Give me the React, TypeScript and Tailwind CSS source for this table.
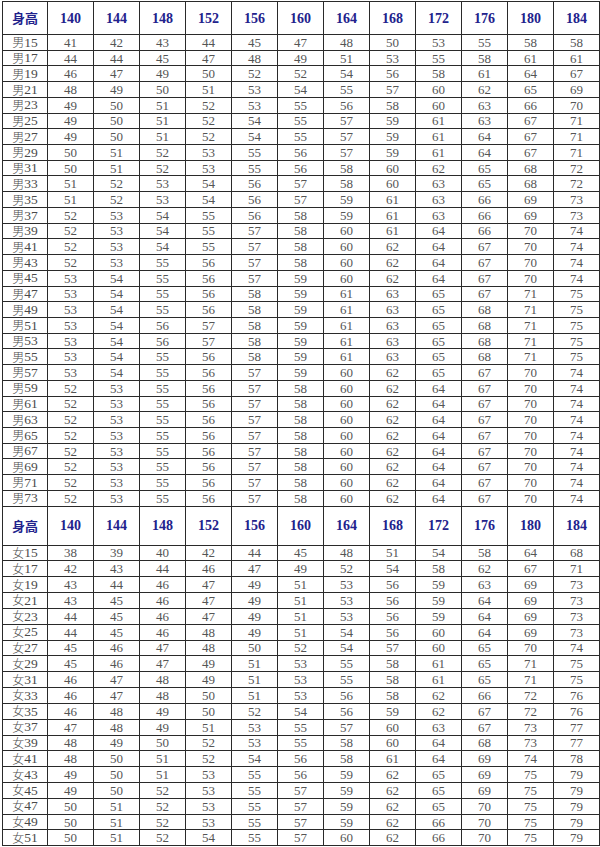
import React from "react";

const heights = ["140", "144", "148", "152", "156", "160", "164", "168", "172", "176", "180", "184"];

const male: [string, number[]][] = [
  ["男15", [41, 42, 43, 44, 45, 47, 48, 50, 53, 55, 58, 58]],
  ["男17", [44, 44, 45, 47, 48, 49, 51, 53, 55, 58, 61, 61]],
  ["男19", [46, 47, 49, 50, 52, 52, 54, 56, 58, 61, 64, 67]],
  ["男21", [48, 49, 50, 51, 53, 54, 55, 57, 60, 62, 65, 69]],
  ["男23", [49, 50, 51, 52, 53, 55, 56, 58, 60, 63, 66, 70]],
  ["男25", [49, 50, 51, 52, 54, 55, 57, 59, 61, 63, 67, 71]],
  ["男27", [49, 50, 51, 52, 54, 55, 57, 59, 61, 64, 67, 71]],
  ["男29", [50, 51, 52, 53, 55, 56, 57, 59, 61, 64, 67, 71]],
  ["男31", [50, 51, 52, 53, 55, 56, 58, 60, 62, 65, 68, 72]],
  ["男33", [51, 52, 53, 54, 56, 57, 58, 60, 63, 65, 68, 72]],
  ["男35", [51, 52, 53, 54, 56, 57, 59, 61, 63, 66, 69, 73]],
  ["男37", [52, 53, 54, 55, 56, 58, 59, 61, 63, 66, 69, 73]],
  ["男39", [52, 53, 54, 55, 57, 58, 60, 61, 64, 66, 70, 74]],
  ["男41", [52, 53, 54, 55, 57, 58, 60, 62, 64, 67, 70, 74]],
  ["男43", [52, 53, 55, 56, 57, 58, 60, 62, 64, 67, 70, 74]],
  ["男45", [53, 54, 55, 56, 57, 59, 60, 62, 64, 67, 70, 74]],
  ["男47", [53, 54, 55, 56, 58, 59, 61, 63, 65, 67, 71, 75]],
  ["男49", [53, 54, 55, 56, 58, 59, 61, 63, 65, 68, 71, 75]],
  ["男51", [53, 54, 56, 57, 58, 59, 61, 63, 65, 68, 71, 75]],
  ["男53", [53, 54, 56, 57, 58, 59, 61, 63, 65, 68, 71, 75]],
  ["男55", [53, 54, 55, 56, 58, 59, 61, 63, 65, 68, 71, 75]],
  ["男57", [53, 54, 55, 56, 57, 59, 60, 62, 65, 67, 70, 74]],
  ["男59", [52, 53, 55, 56, 57, 58, 60, 62, 64, 67, 70, 74]],
  ["男61", [52, 53, 55, 56, 57, 58, 60, 62, 64, 67, 70, 74]],
  ["男63", [52, 53, 55, 56, 57, 58, 60, 62, 64, 67, 70, 74]],
  ["男65", [52, 53, 55, 56, 57, 58, 60, 62, 64, 67, 70, 74]],
  ["男67", [52, 53, 55, 56, 57, 58, 60, 62, 64, 67, 70, 74]],
  ["男69", [52, 53, 55, 56, 57, 58, 60, 62, 64, 67, 70, 74]],
  ["男71", [52, 53, 55, 56, 57, 58, 60, 62, 64, 67, 70, 74]],
  ["男73", [52, 53, 55, 56, 57, 58, 60, 62, 64, 67, 70, 74]],
];

const female: [string, number[]][] = [
  ["女15", [38, 39, 40, 42, 44, 45, 48, 51, 54, 58, 64, 68]],
  ["女17", [42, 43, 44, 46, 47, 49, 52, 54, 58, 62, 67, 71]],
  ["女19", [43, 44, 46, 47, 49, 51, 53, 56, 59, 63, 69, 73]],
  ["女21", [43, 45, 46, 47, 49, 51, 53, 56, 59, 64, 69, 73]],
  ["女23", [44, 45, 46, 47, 49, 51, 53, 56, 59, 64, 69, 73]],
  ["女25", [44, 45, 46, 48, 49, 51, 54, 56, 60, 64, 69, 73]],
  ["女27", [45, 46, 47, 48, 50, 52, 54, 57, 60, 65, 70, 74]],
  ["女29", [45, 46, 47, 49, 51, 53, 55, 58, 61, 65, 71, 75]],
  ["女31", [46, 47, 48, 49, 51, 53, 55, 58, 61, 65, 71, 75]],
  ["女33", [46, 47, 48, 50, 51, 53, 56, 58, 62, 66, 72, 76]],
  ["女35", [46, 48, 49, 50, 52, 54, 56, 59, 62, 67, 72, 76]],
  ["女37", [47, 48, 49, 51, 53, 55, 57, 60, 63, 67, 73, 77]],
  ["女39", [48, 49, 50, 52, 53, 55, 58, 60, 64, 68, 73, 77]],
  ["女41", [48, 50, 51, 52, 54, 56, 58, 61, 64, 69, 74, 78]],
  ["女43", [49, 50, 51, 53, 55, 56, 59, 62, 65, 69, 75, 79]],
  ["女45", [49, 50, 52, 53, 55, 57, 59, 62, 65, 69, 75, 79]],
  ["女47", [50, 51, 52, 53, 55, 57, 59, 62, 65, 70, 75, 79]],
  ["女49", [50, 51, 52, 53, 55, 57, 59, 62, 66, 70, 75, 79]],
  ["女51", [50, 51, 52, 54, 55, 57, 60, 62, 66, 70, 75, 79]],
];

const serif = { fontFamily: '"Liberation Serif", "Noto Sans CJK SC", serif' };

function HeaderRow({ tall }: { tall: boolean }) {
  const h = tall ? "h-[39px]" : "h-[33px]";
  return (
    <>
      <div className={`${h} flex items-center justify-center border-r border-b border-[#2a2a2a] text-[13px] font-bold text-[#22228c]`} style={{ fontFamily: '"Noto Sans CJK SC", sans-serif' }}>
        身高
      </div>
      {heights.map((x) => (
        <div key={x} className={`${h} flex items-center justify-center border-r border-b border-[#2a2a2a] text-[14px] font-bold text-[#22228c]`}>
          {x}
        </div>
      ))}
    </>
  );
}

function DataRows({ rows, h }: { rows: [string, number[]][]; h: string }) {
  return (
    <>
      {rows.map(([label, vals]) => (
        <React.Fragment key={label}>
          <div className={`${h} flex items-center justify-center border-r border-b border-[#2a2a2a] text-[13.5px] leading-none text-[#4a4a4a]`}>
            <span style={{ fontFamily: '"Noto Sans CJK SC", sans-serif', fontWeight: 300 }} className="text-[12px] leading-none">{label.slice(0, 1)}</span>
            <span>{label.slice(1)}</span>
          </div>
          {vals.map((v, i) => (
            <div key={i} className={`${h} flex items-center justify-center border-r border-b border-[#2a2a2a] text-[13px] leading-none text-[#555555]`}>
              {v}
            </div>
          ))}
        </React.Fragment>
      ))}
    </>
  );
}

export default function App() {
  return (
    <div className="w-[600px] h-[847px] bg-white pl-[2px] pt-[1px] overflow-hidden" style={serif}>
      <div className="grid grid-cols-[45px_repeat(12,46px)] border-t border-l border-[#2a2a2a]">
        <HeaderRow tall={false} />
        <DataRows rows={male} h="h-[15.73px]" />
        <HeaderRow tall={true} />
        <DataRows rows={female} h="h-[15.84px]" />
      </div>
    </div>
  );
}
